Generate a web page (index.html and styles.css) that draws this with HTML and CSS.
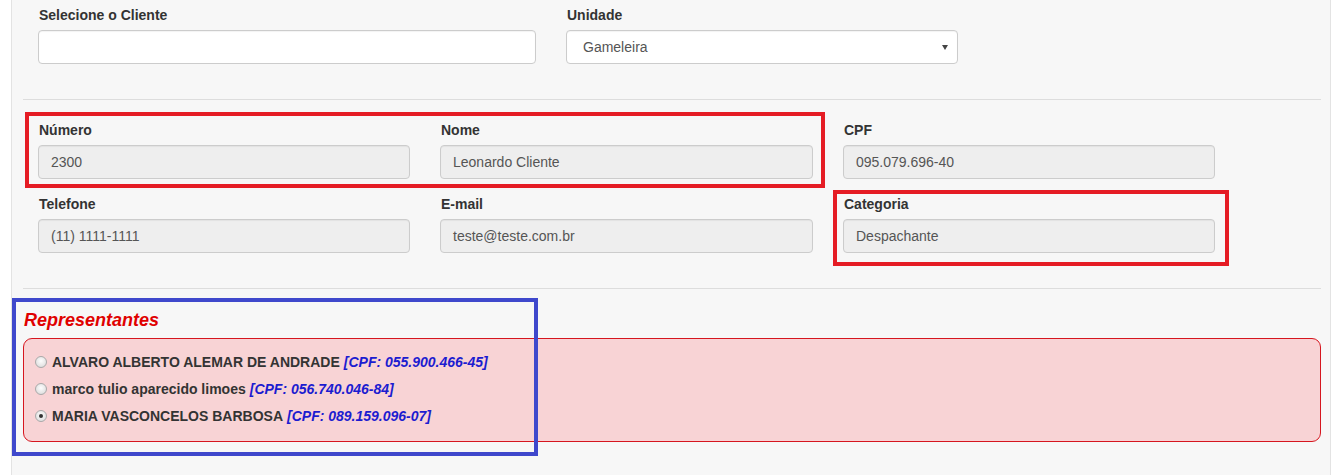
FILE: index.html
```html
<!DOCTYPE html>
<html lang="pt-BR">
<head>
<meta charset="utf-8">
<title>Cliente</title>
<link rel="stylesheet" href="styles.css">
</head>
<body>
<div class="panel">
  <div class="row row-top">
    <div class="form-group">
      <label class="lbl">Selecione o Cliente</label>
      <div class="input"></div>
    </div>
    <div class="form-group">
      <label class="lbl">Unidade</label>
      <div class="input select">Gameleira</div>
    </div>
  </div>
  <hr class="sep">
  <div class="row row-three">
    <div class="form-group">
      <label class="lbl">Número</label>
      <div class="input disabled">2300</div>
    </div>
    <div class="form-group">
      <label class="lbl">Nome</label>
      <div class="input disabled">Leonardo Cliente</div>
    </div>
    <div class="form-group">
      <label class="lbl">CPF</label>
      <div class="input disabled">095.079.696-40</div>
    </div>
    <div class="form-group">
      <label class="lbl">Telefone</label>
      <div class="input disabled">(11) 1111-1111</div>
    </div>
    <div class="form-group">
      <label class="lbl">E-mail</label>
      <div class="input disabled">teste@teste.com.br</div>
    </div>
    <div class="form-group">
      <label class="lbl">Categoria</label>
      <div class="input disabled">Despachante</div>
    </div>
  </div>
  <hr class="sep">
  <h4 class="rep-title">Representantes</h4>
  <div class="rep-box">
    <div class="rep-item"><span class="radio"></span><span class="rep-name">ALVARO ALBERTO ALEMAR DE ANDRADE</span><span class="rep-cpf">[CPF: 055.900.466-45]</span></div>
    <div class="rep-item"><span class="radio"></span><span class="rep-name">marco tulio aparecido limoes</span><span class="rep-cpf">[CPF: 056.740.046-84]</span></div>
    <div class="rep-item"><span class="radio checked"></span><span class="rep-name">MARIA VASCONCELOS BARBOSA</span><span class="rep-cpf">[CPF: 089.159.096-07]</span></div>
  </div>

  <div class="mark mark-red mark-1"></div>
  <div class="mark mark-red mark-2"></div>
  <div class="mark mark-blue mark-3"></div>
</div>
</body>
</html>
```
FILE: styles.css
```css
* { box-sizing: border-box; }
html, body { margin: 0; padding: 0; background: #fff; }
body {
  font-family: "Liberation Sans", Arial, Helvetica, sans-serif;
  font-size: 14px;
  color: #333;
  height: 475px;
  overflow: hidden;
}
.panel {
  position: relative;
  margin-left: 11px;
  width: 1320px;
  min-height: 475px;
  background: #f7f7f7;
  border-left: 1px solid #e3e3e3;
  border-right: 1px solid #e3e3e3;
  padding: 5px 9px 0 11px;
}
.row { display: grid; padding: 0 15px; column-gap: 30px; }
.row-top { grid-template-columns: 498px 392px; column-gap: 30px; }
.row-three { grid-template-columns: 372px 373px 372px; }
.form-group { margin-bottom: 15px; }
.lbl {
  display: block;
  font-weight: bold;
  font-size: 14px;
  line-height: 21px;
  margin-bottom: 4px;
  padding-left: 1px;
  color: #333;
}
.input {
  height: 34px;
  border: 1px solid #ccc;
  border-radius: 4px;
  background: #fff;
  padding: 0 12px;
  font-size: 14px;
  line-height: 32px;
  color: #555;
  box-shadow: inset 0 1px 1px rgba(0,0,0,0.05);
}
.input.disabled { background: #eee; }
.select { position: relative; padding-left: 16px; }
.select::after {
  content: "";
  position: absolute;
  right: 9px;
  top: 14px;
  border-left: 3px solid transparent;
  border-right: 3px solid transparent;
  border-top: 5px solid #444;
}
.sep {
  border: 0;
  border-top: 1px solid #ddd;
  margin: 20px 0;
  height: 0;
}
.rep-title {
  margin: 0 0 7px 1px;
  font-size: 18px;
  line-height: 22px;
  font-weight: bold;
  font-style: italic;
  color: #e00000;
}
.rep-box {
  background: #f8d3d5;
  border: 1px solid #d6161f;
  border-radius: 9px;
  padding: 9px 11px 12px;
}
.rep-item {
  display: flex;
  align-items: center;
  height: 27px;
  font-size: 14px;
  font-weight: bold;
  color: #333;
  white-space: nowrap;
}
.radio {
  width: 12px;
  height: 12px;
  border-radius: 50%;
  border: 1px solid #a9a9a9;
  background: radial-gradient(circle at 50% 40%, #fdfdfd 0%, #e2e2e2 70%, #cfcfcf 100%);
  margin-right: 5px;
  flex: none;
  position: relative;
}
.radio.checked::after {
  content: "";
  position: absolute;
  left: 3px;
  top: 3px;
  width: 4px;
  height: 4px;
  border-radius: 50%;
  background: #333;
}
.rep-cpf { font-style: italic; color: #1c1cd0; margin-left: 4px; }
.mark { position: absolute; pointer-events: none; }
.mark-red { border: 4px solid #e51c24; }
.mark-blue { border: 4px solid #3f48cc; }
.mark-1 { left: 13px; top: 112px; width: 800px; height: 76px; }
.mark-2 { left: 821px; top: 190px; width: 396px; height: 76px; }
.mark-3 { left: 0px; top: 298px; width: 526px; height: 158px; }
```
